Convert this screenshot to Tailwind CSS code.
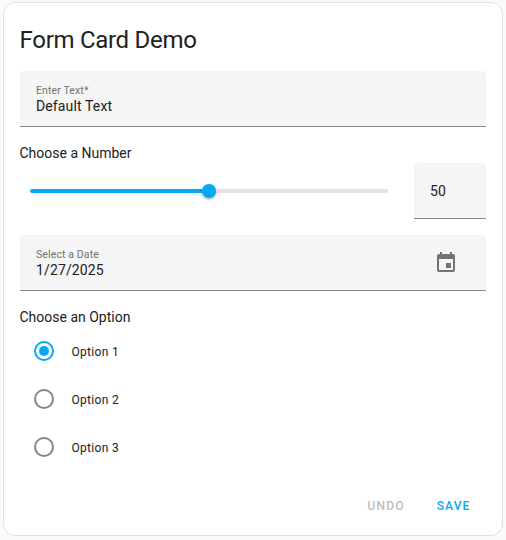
<!DOCTYPE html>
<html lang="en"><head><meta charset="utf-8"><title>Form Card Demo</title>
<script src="https://cdn.jsdelivr.net/npm/@tailwindcss/browser@4"></script></head>
<body class="bg-[#fafafa] font-[Roboto,sans-serif] text-[#212121] w-[506px] h-[540px] overflow-hidden pt-[2px] pl-[2.5px]">
<main class="w-[500px] h-[534px] bg-white border border-[#e0e0e0] rounded-xl px-4 flex flex-col">
<h1 class="text-[24px] leading-[48px] mt-[13px] tracking-[-0.012em]">Form Card Demo</h1>
<label class="mt-[7px] h-14 bg-[#f5f5f5] rounded-t border-b border-[#8a8a8a] px-[16.5px] pt-[13px] flex flex-col">
<span class="text-[10.5px] leading-[13px] tracking-[0.12px] text-[#727272]">Enter Text*</span>
<span class="text-[14px] leading-[18px] tracking-[0.13px]">Default Text</span>
</label>
<section class="mt-4 h-[76px]">
<h2 class="text-[14px] leading-5">Choose a Number</h2>
<div class="flex items-center justify-between pl-[10px]">
<div class="w-[358px] h-5 flex items-center">
<div class="w-[172px] h-1 rounded-l bg-[#03a9f4]"></div>
<div class="size-[14px] rounded-full bg-[#03a9f4] shadow-[0_1px_3px_rgba(0,0,0,.4)]"></div>
<div class="flex-1 h-1 rounded-r bg-[#e4e0e6]"></div>
</div>
<div class="w-[72px] h-14 bg-[#f5f5f5] rounded-t border-b border-[#8a8a8a] px-[16.5px] pt-px flex items-center text-[14px] tracking-[0.1px]">50</div>
</div>
</section>
<div class="mt-4 h-14 bg-[#f5f5f5] rounded-t border-b border-[#8a8a8a] pl-[16.5px] pr-7 flex items-center justify-between">
<div class="flex flex-col pt-px">
<span class="text-[10.5px] leading-[13px] tracking-[0.12px] text-[#727272]">Select a Date</span>
<span class="text-[14px] leading-[18px] tracking-[0.13px]">1/27/2025</span>
</div>
<svg class="size-6 text-[#737373]" viewBox="0 0 24 24" fill="currentColor"><path d="M19 19H5V8h14m-3-7v2H8V1H6v2H5c-1.11 0-2 .89-2 2v14a2 2 0 0 0 2 2h14a2 2 0 0 0 2-2V5a2 2 0 0 0-2-2h-1V1m-1 11h-5v5h5z"/></svg>
</div>
<section class="mt-4">
<h2 class="text-[14px] leading-5">Choose an Option</h2>
<div class="flex flex-col text-[12px] tracking-[0.3px]">
<label class="h-12 pl-[14px] flex items-center gap-[18px]"><span class="size-5 rounded-full border-2 border-[#03a9f4] grid place-items-center"><span class="size-[10px] rounded-full bg-[#03a9f4]"></span></span><span class="pt-[2px]">Option 1</span></label>
<label class="h-12 pl-[14px] flex items-center gap-[18px]"><span class="size-5 rounded-full border-2 border-[#858585]"></span><span class="pt-[2px]">Option 2</span></label>
<label class="h-12 pl-[14px] flex items-center gap-[18px]"><span class="size-5 rounded-full border-2 border-[#858585]"></span><span class="pt-[2px]">Option 3</span></label>
</div>
</section>
<footer class="mt-[17px] -mr-px h-9 flex justify-end text-[12px] font-medium tracking-[1.15px]">
<button class="h-9 px-4 text-[#bdbdbd]">UNDO</button><button class="h-9 px-4 text-[#03a9f4]">SAVE</button>
</footer>
</main></body></html>
